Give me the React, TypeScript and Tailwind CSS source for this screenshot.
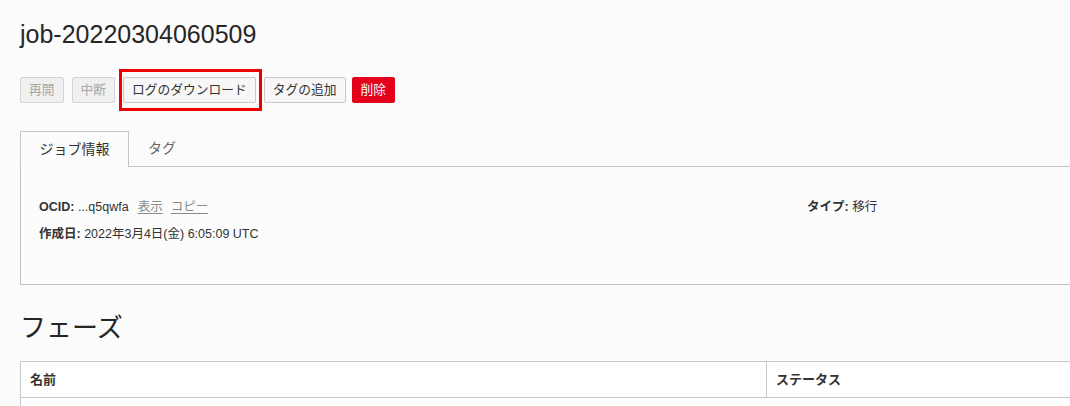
import React from "react";

const FONT = "font-['Liberation_Sans','Noto_Sans_CJK_JP',sans-serif]";

function Btn({
  children,
  kind = "normal",
  className = "",
}: {
  children: React.ReactNode;
  kind?: "normal" | "disabled" | "danger";
  className?: string;
}) {
  const look =
    kind === "disabled"
      ? "bg-[#f0f0f0] border-[#d4d4d4] text-[#a8a8a8]"
      : kind === "danger"
        ? "bg-[#e2001a] border-[#e2001a] text-white"
        : "bg-[#f7f7f7] border-[#c8c8c8] text-[#333333]";
  return (
    <button
      className={`h-[26px] px-[8px] border rounded-[2px] text-[12.75px] leading-none whitespace-nowrap ${look} ${className}`}
    >
      {children}
    </button>
  );
}

export default function App() {
  return (
    <div
      className={`w-[1070px] h-[406px] overflow-hidden bg-[#fbfbfb] text-[#333333] ${FONT}`}
    >
      <div className="w-[1100px] pl-[20px]">
        {/* Title */}
        <h1 className="pt-[20px] text-[25px] leading-[28px] text-[#262626]">
          job-20220304060509
        </h1>

        {/* Actions */}
        <div className="flex items-center mt-[29px]">
          <Btn kind="disabled">再開</Btn>
          <Btn kind="disabled" className="ml-[8px]">
            中断
          </Btn>
          <span className="relative ml-[8px] flex">
            <Btn>ログのダウンロード</Btn>
            <span className="absolute left-[-4px] right-[-6px] top-[-8px] bottom-[-8px] border-[3px] border-[#ee0000] pointer-events-none" />
          </span>
          <Btn className="ml-[8px]">タグの追加</Btn>
          <Btn kind="danger" className="ml-[6px]">
            削除
          </Btn>
        </div>

        {/* Tabs */}
        <div className="flex mt-[28px] border-b border-[#c6c6c6]">
          <div className="w-[109px] h-[36px] -mb-px flex items-center justify-center border border-b-0 border-[#c6c6c6] bg-[#fcfcfc] text-[14px] text-[#333333]">
            ジョブ情報
          </div>
          <div className="w-[66px] h-[35px] flex items-center justify-center text-[14px] text-[#666666]">
            タグ
          </div>
        </div>
        <div className="h-[118px] border-l border-r border-b border-[#c0c0c0] bg-[#fcfcfc] pl-[18px] pt-[30px] text-[12.5px]">
          <div className="grid grid-cols-[768px_1fr]">
            <div className="flex flex-col gap-[7px]">
              <div className="leading-[20px] whitespace-nowrap">
                <b className="font-bold">OCID:</b> ...q5qwfa
                <a className="ml-[9px] text-[#8a8a8a] underline underline-offset-2">
                  表示
                </a>
                <a className="ml-[8px] text-[#8a8a8a] underline underline-offset-2">
                  コピー
                </a>
              </div>
              <div className="leading-[20px] whitespace-nowrap">
                <b className="font-bold">作成日:</b> 2022年3月4日(金) 6:05:09 UTC
              </div>
            </div>
            <div className="leading-[20px] whitespace-nowrap">
              <b className="font-bold">タイプ:</b> 移行
            </div>
          </div>
        </div>

        {/* Phases */}
        <h2 className="mt-[27px] text-[26px] leading-[32px] text-[#262626]">
          フェーズ
        </h2>
        <div className="mt-[17px] border border-[#c3c7cf] bg-white">
          <div className="grid grid-cols-[746px_1fr] h-[36px] border-b border-[#c3c7cf] text-[13px] font-bold">
            <div className="flex items-center pl-[9px] border-r border-[#c3c7cf]">
              名前
            </div>
            <div className="flex items-center pl-[9px]">ステータス</div>
          </div>
          <div className="h-[40px]" />
        </div>
      </div>
    </div>
  );
}
